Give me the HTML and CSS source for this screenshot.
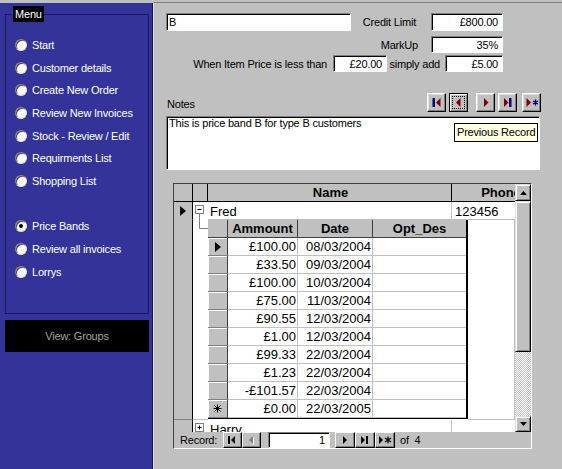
FILE: index.html
```html
<!DOCTYPE html>
<html lang="en">
<head>
<meta charset="utf-8">
<title>Price Bands</title>
<link rel="stylesheet" href="styles.css">
</head>
<body>
<div class="app">
  <aside class="sidebar">
    <div class="menu-box">
      <div class="menu-legend">Menu</div>
      <ul class="menu">
        <li class="mi"><span class="radio"></span>Start</li>
        <li class="mi"><span class="radio"></span>Customer details</li>
        <li class="mi"><span class="radio"></span>Create New Order</li>
        <li class="mi"><span class="radio"></span>Review New Invoices</li>
        <li class="mi"><span class="radio"></span>Stock - Review / Edit</li>
        <li class="mi"><span class="radio"></span>Requirments List</li>
        <li class="mi"><span class="radio"></span>Shopping List</li>
        <li class="mi"></li>
        <li class="mi"><span class="radio on"></span>Price Bands</li>
        <li class="mi"><span class="radio"></span>Review all invoices</li>
        <li class="mi"><span class="radio"></span>Lorrys</li>
      </ul>
    </div>
    <div class="view-box">View: Groups</div>
  </aside>

  <main class="form">
    <div class="row row1">
      <div class="field f-name">B</div>
      <span class="lbl l-credit">Credit Limit</span>
      <div class="field num f-credit">£800.00</div>
    </div>
    <div class="row row2">
      <span class="lbl l-markup">MarkUp</span>
      <div class="field num f-credit">35%</div>
    </div>
    <div class="row row3">
      <span class="lbl l-less">When Item Price is less than</span>
      <div class="field num f-less">£20.00</div>
      <span class="lbl l-add">simply add</span>
      <div class="field num f-add">£5.00</div>
    </div>

    <div class="row notes-head">
      <span class="lbl l-notes">Notes</span>
      <div class="navbtns">
        <button type="button" class="nbtn"><svg width="17" height="17" viewBox="0 0 17 17"><rect x="4.5" y="4" width="2.5" height="9" fill="#000080"/><path d="M12.5 4V13L8 8.5Z" fill="#800000"/></svg></button>
        <button type="button" class="nbtn focus g3"><svg width="15" height="15" viewBox="1 1 15 15"><path d="M10.5 4V13L6 8.5Z" fill="#800000"/></svg></button>
        <button type="button" class="nbtn g8"><svg width="17" height="17" viewBox="0 0 17 17"><path d="M7 4V13L11.5 8.5Z" fill="#800000"/></svg></button>
        <button type="button" class="nbtn g3"><svg width="17" height="17" viewBox="0 0 17 17"><path d="M5 4V13L9.5 8.5Z" fill="#800000"/><rect x="10" y="4" width="2.5" height="9" fill="#000080"/></svg></button>
        <button type="button" class="nbtn g5"><svg width="17" height="17" viewBox="0 0 17 17"><path d="M3.5 4V13L8 8.5Z" fill="#800000"/><path d="M12.5 5.5V11.5M10 7L15 10M10 10L15 7" stroke="#000080" stroke-width="1.3"/></svg></button>
      </div>
    </div>

    <div class="notes-wrap">
      <div class="field notes">This is price band B for type B customers</div>
      <div class="tooltip">Previous Record</div>
    </div>

    <div class="sheet">
      <div class="sheet-body">
        <div class="grid">
          <div class="drow hdr">
            <div class="c sel"></div>
            <div class="c exp"></div>
            <div class="c name">Name</div>
            <div class="c phone">Phone</div>
          </div>

          <div class="drow rec">
            <div class="c sel"><svg width="6" height="10" viewBox="0 0 6 10"><path d="M0 0L6 5L0 10Z"/></svg></div>
            <div class="c exp open"><svg width="15" height="18" viewBox="0 0 15 18"><rect x="2.5" y="3.5" width="8" height="8" fill="#fff" stroke="#808080"/><path d="M4.5 7.5H8.5" stroke="#000"/><path d="M6.5 11.5V18" stroke="#808080"/></svg></div>
            <div class="c name">Fred</div>
            <div class="c phone">123456</div>
          </div>

          <div class="drow subrow">
            <div class="c sel"></div>
            <div class="c exp"><svg width="15" height="10" viewBox="0 0 15 10"><path d="M6.5 0V8.5H15" fill="none" stroke="#808080"/></svg></div>
            <div class="sub">
              <div class="srow shdr">
                <div class="sc ssel"></div>
                <div class="sc amt">Ammount</div>
                <div class="sc date">Date</div>
                <div class="sc optd">Opt_Des</div>
              </div>
              <div class="srow">
                <div class="sc ssel"><svg width="6" height="10" viewBox="0 0 6 10"><path d="M0 0L6 5L0 10Z"/></svg></div>
                <div class="sc amt">£100.00</div><div class="sc date">08/03/2004</div><div class="sc optd"></div>
              </div>
              <div class="srow"><div class="sc ssel"></div><div class="sc amt">£33.50</div><div class="sc date">09/03/2004</div><div class="sc optd"></div></div>
              <div class="srow"><div class="sc ssel"></div><div class="sc amt">£100.00</div><div class="sc date">10/03/2004</div><div class="sc optd"></div></div>
              <div class="srow"><div class="sc ssel"></div><div class="sc amt">£75.00</div><div class="sc date">11/03/2004</div><div class="sc optd"></div></div>
              <div class="srow"><div class="sc ssel"></div><div class="sc amt">£90.55</div><div class="sc date">12/03/2004</div><div class="sc optd"></div></div>
              <div class="srow"><div class="sc ssel"></div><div class="sc amt">£1.00</div><div class="sc date">12/03/2004</div><div class="sc optd"></div></div>
              <div class="srow"><div class="sc ssel"></div><div class="sc amt">£99.33</div><div class="sc date">22/03/2004</div><div class="sc optd"></div></div>
              <div class="srow"><div class="sc ssel"></div><div class="sc amt">£1.23</div><div class="sc date">22/03/2004</div><div class="sc optd"></div></div>
              <div class="srow"><div class="sc ssel"></div><div class="sc amt">-£101.57</div><div class="sc date">22/03/2004</div><div class="sc optd"></div></div>
              <div class="srow">
                <div class="sc ssel"><svg width="9" height="9" viewBox="0 0 9 9"><path d="M4.5 0.5V8.5M0.5 4.5H8.5M1.5 1.5L7.5 7.5M7.5 1.5L1.5 7.5" stroke="#000"/></svg></div>
                <div class="sc amt">£0.00</div><div class="sc date">22/03/2005</div><div class="sc optd"></div>
              </div>
            </div>
            <div class="c fill"></div>
          </div>

          <div class="drow rec">
            <div class="c sel"></div>
            <div class="c exp"><svg width="15" height="18" viewBox="0 0 15 18"><rect x="2.5" y="3.5" width="8" height="8" fill="#fff" stroke="#808080"/><path d="M4.5 7.5H8.5M6.5 5.5V9.5" stroke="#000"/></svg></div>
            <div class="c name">Harry</div>
            <div class="c phone"></div>
          </div>
        </div>

        <div class="vscroll">
          <div class="sbtn up"><svg width="7" height="4" viewBox="0 0 7 4"><path d="M0 4L3.5 0L7 4Z"/></svg></div>
          <div class="sbtn thumb"></div>
          <div class="track"></div>
          <div class="sbtn down"><svg width="7" height="4" viewBox="0 0 7 4"><path d="M0 0H7L3.5 4Z"/></svg></div>
        </div>
      </div>

      <div class="recnav">
        <span class="rl">Record:</span>
        <div class="rb"><svg width="17" height="14" viewBox="0 0 17 14"><rect x="4" y="3" width="2" height="8"/><path d="M11 3V11L7 7Z"/></svg></div>
        <div class="rb"><svg width="17" height="14" viewBox="0 0 17 14"><path d="M11 4V12L7 8Z" fill="#fff"/><path d="M10 3V11L6 7Z" fill="#808080"/></svg></div>
        <div class="field num rbox">1</div>
        <div class="rb w20"><svg width="18" height="14" viewBox="0 0 18 14"><path d="M7 3V11L11 7Z"/></svg></div>
        <div class="rb w20"><svg width="18" height="14" viewBox="0 0 18 14"><path d="M5 3V11L9 7Z"/><rect x="10" y="3" width="2" height="8"/></svg></div>
        <div class="rb w20"><svg width="18" height="14" viewBox="0 0 18 14"><path d="M3 3V11L7 7Z"/><path d="M12 3.5V10.5M9 5L15 9M9 9L15 5" stroke="#000" stroke-width="1.2"/></svg></div>
        <span class="of">of&nbsp;&nbsp;4</span>
      </div>
    </div>
  </main>
</div>
</body>
</html>
```

FILE: styles.css
```css
* { box-sizing: border-box; margin: 0; padding: 0; }

html, body { width: 562px; height: 469px; overflow: hidden; }

body {
  background: #c0c0c0;
  font-family: "Liberation Sans", Arial, sans-serif;
  font-size: 11px;
  letter-spacing: -0.2px;
  color: #000;
}

.app { display: flex; height: 469px; padding-top: 2px; }

/* ---------- sidebar ---------- */
.sidebar {
  flex: 0 0 153px;
  margin-top: 1px;
  background: #333399;
  border-right: 1px solid #14144a;
  color: #fff;
}

.menu-box {
  margin: 11px 0 0 5px;
  width: 144px;
  height: 300px;
  border: 1px solid #1a1a5e;
}

.menu-legend {
  display: block;
  width: max-content;
  height: 16px;
  line-height: 16px;
  margin: -9px 0 0 7px;
  padding: 0 2px;
  background: #000;
  color: #fff;
}

.menu { list-style: none; margin: 11.6px 0 0 9px; }

.mi {
  height: 22.7px;
  display: flex;
  align-items: center;
  gap: 5px;
  white-space: nowrap;
}

.radio {
  flex: none;
  width: 12px;
  height: 12px;
  border-radius: 50%;
  background: #fff;
  border: 1px solid;
  border-color: #808080 #e0e0e0 #e0e0e0 #808080;
  box-shadow: inset 1px 1px 0 #404040;
  display: flex;
  align-items: center;
  justify-content: center;
}

.radio.on::after {
  content: "";
  width: 4px;
  height: 4px;
  border-radius: 50%;
  background: #000;
}

.view-box {
  margin: 6px 0 0 5px;
  width: 144px;
  height: 32px;
  background: #000;
  color: #a3a3a3;
  display: flex;
  align-items: center;
  justify-content: center;
}

/* ---------- form ---------- */
.form {
  flex: 1;
  border-top: 1px solid #808080;
  border-left: 1px solid #e4e4e4;
  display: flex;
  flex-direction: column;
}

.row { display: flex; align-items: center; flex: none; }

.field {
  background: #fff;
  border: 1px solid;
  border-color: #808080 #fff #fff #808080;
  box-shadow: inset 1px 1px 0 #000;
  height: 100%;
  padding: 0 2px 0 2px;
  display: flex;
  align-items: center;
  white-space: nowrap;
  overflow: hidden;
}

.num { justify-content: flex-end; padding-right: 4px; }

.lbl { white-space: nowrap; }

.row1 { margin-top: 10px; height: 18px; }
.f-name { margin-left: 12px; width: 185px; }
.l-credit { width: 65px; text-align: right; margin-right: 15px; }
.f-credit { width: 72px; }

.row2 { margin-top: 5px; height: 17px; }
.l-markup { width: 264px; text-align: right; margin-right: 13px; }

.row3 { margin-top: 2px; height: 17px; }
.l-less { width: 173px; text-align: right; margin-right: 6px; }
.f-less { width: 54px; }
.l-add { width: 53px; text-align: right; margin-right: 5px; }
.f-add { width: 58px; }

.notes-head { margin-top: 21px; height: 19px; align-items: stretch; }
.l-notes { margin-left: 13px; padding-top: 5px; }

.navbtns { margin-left: auto; margin-right: 21px; display: flex; }

.nbtn {
  appearance: none;
  width: 19px;
  height: 19px;
  background: #c0c0c0;
  border: 1px solid;
  border-color: #fff #000 #000 #fff;
  box-shadow: inset -1px -1px 0 #808080, inset 1px 1px 0 #dfdfdf;
  display: flex;
  align-items: center;
  justify-content: center;
  padding: 0;
}
.nbtn svg { display: block; }
.nbtn.focus {
  border-color: #000;
  box-shadow: inset 1px 1px 0 #fff, inset -1px -1px 0 #808080;
  outline: 1px dotted #000;
  outline-offset: -4px;
}
.g3 { margin-left: 3px; }
.g5 { margin-left: 5px; }
.g8 { margin-left: 8px; }

.notes-wrap {
  position: relative;
  flex: none;
  margin: 4px 0 0 12px;
  width: 374px;
  height: 54px;
}
.notes { align-items: flex-start; padding: 0 2px; white-space: normal; }

.tooltip {
  position: absolute;
  left: 288px;
  top: 7px;
  width: 84px;
  height: 19px;
  background: #ffffe1;
  border: 1px solid #000;
  padding-left: 2px;
  line-height: 17px;
  white-space: nowrap;
}

/* ---------- datasheet ---------- */
.sheet {
  flex: none;
  margin: 13px 0 0 19px;
  width: 359px;
  height: 266px;
  border: 1px solid;
  border-color: #404040 #fff #fff #404040;
  display: flex;
  flex-direction: column;
}

.sheet-body { display: flex; height: 248px; flex: none; }

.grid {
  width: 341px;
  height: 248px;
  overflow: hidden;
  background: #fff;
  font-size: 13px;
  letter-spacing: 0;
}

.drow { display: flex; height: 18px; flex: none; }

.c {
  flex: none;
  height: 100%;
  overflow: hidden;
  white-space: nowrap;
  border-right: 1px solid #c0c0c0;
  border-bottom: 1px solid #c0c0c0;
  line-height: 17px;
  padding-top: 1px;
}

.sel {
  width: 19px;
  padding: 0;
  background: #c0c0c0;
  border-right: 1px solid #000;
  display: flex;
  align-items: center;
  justify-content: center;
}
.exp { width: 15px; padding: 0; border-right: none; }
.exp svg { display: block; }
.exp.open { border-bottom: none; }
.name { width: 244px; padding-left: 2px; }
.phone { width: 96px; padding-left: 3px; }

.hdr .c {
  background: #c0c0c0;
  font-weight: bold;
  text-align: center;
  border-right: 1px solid #000;
  border-bottom: 1px solid #000;
  padding-top: 0;
  line-height: 17px;
}

.subrow { height: 200px; }
.subrow .sel { border-bottom-color: #808080; }
.fill { flex: 1; }

.sub {
  flex: none;
  width: 260px;
  height: 199px;
  border-right: 2px solid #000;
  border-bottom: 1px solid #000;
  display: flex;
  flex-direction: column;
  background: #fff;
}

.srow { display: flex; height: 18px; flex: none; }

.sc {
  flex: none;
  height: 18px;
  border-right: 1px solid #c0c0c0;
  border-bottom: 1px solid #c0c0c0;
  line-height: 17px;
  overflow: hidden;
  white-space: nowrap;
}
.ssel {
  width: 20px;
  background: #c0c0c0;
  border-right: 1px solid #404040;
  border-bottom: 1px solid #808080;
  box-shadow: inset 1px 1px 0 #fff;
  display: flex;
  align-items: center;
  justify-content: center;
}
.amt { width: 70px; text-align: right; padding-right: 1px; }
.date { width: 75px; text-align: right; padding-right: 1px; }
.optd { width: 93px; border-right: none; }

.shdr .sc {
  background: #c0c0c0;
  font-weight: bold;
  text-align: center;
  border-right-color: #404040;
  border-bottom-color: #404040;
  box-shadow: none;
  padding-right: 0;
}
.shdr .optd { border-right: none; }

/* scrollbar */
.vscroll {
  width: 16px;
  display: flex;
  flex-direction: column;
  background: #c0c0c0;
}
.sbtn {
  flex: none;
  height: 17px;
  background: #c0c0c0;
  border: 1px solid;
  border-color: #dfdfdf #000 #000 #dfdfdf;
  box-shadow: inset 1px 1px 0 #fff, inset -1px -1px 0 #808080;
  display: flex;
  align-items: center;
  justify-content: center;
}
.sbtn svg { display: block; }
.thumb { height: 151px; }
.down { height: 16px; }
.track {
  flex: 1;
  background: repeating-conic-gradient(#fff 0 25%, #c0c0c0 0 50%) 0 0 / 2px 2px;
}

/* record navigator */
.recnav {
  height: 16px;
  flex: none;
  display: flex;
  align-items: stretch;
  background: #c0c0c0;
}
.rl { width: 49px; padding-left: 6px; display: flex; align-items: center; }
.rb {
  flex: none;
  width: 19px;
  background: #c0c0c0;
  border: 1px solid;
  border-color: #fff #000 #000 #fff;
  box-shadow: inset -1px -1px 0 #808080;
  display: flex;
  align-items: center;
  justify-content: center;
}
.rb svg { display: block; }
.rb.w20 { width: 20px; }
.rbox { flex: none; margin: 0 5px 0 7px; width: 62px; }
.of { margin-left: 5px; display: flex; align-items: center; }
```
